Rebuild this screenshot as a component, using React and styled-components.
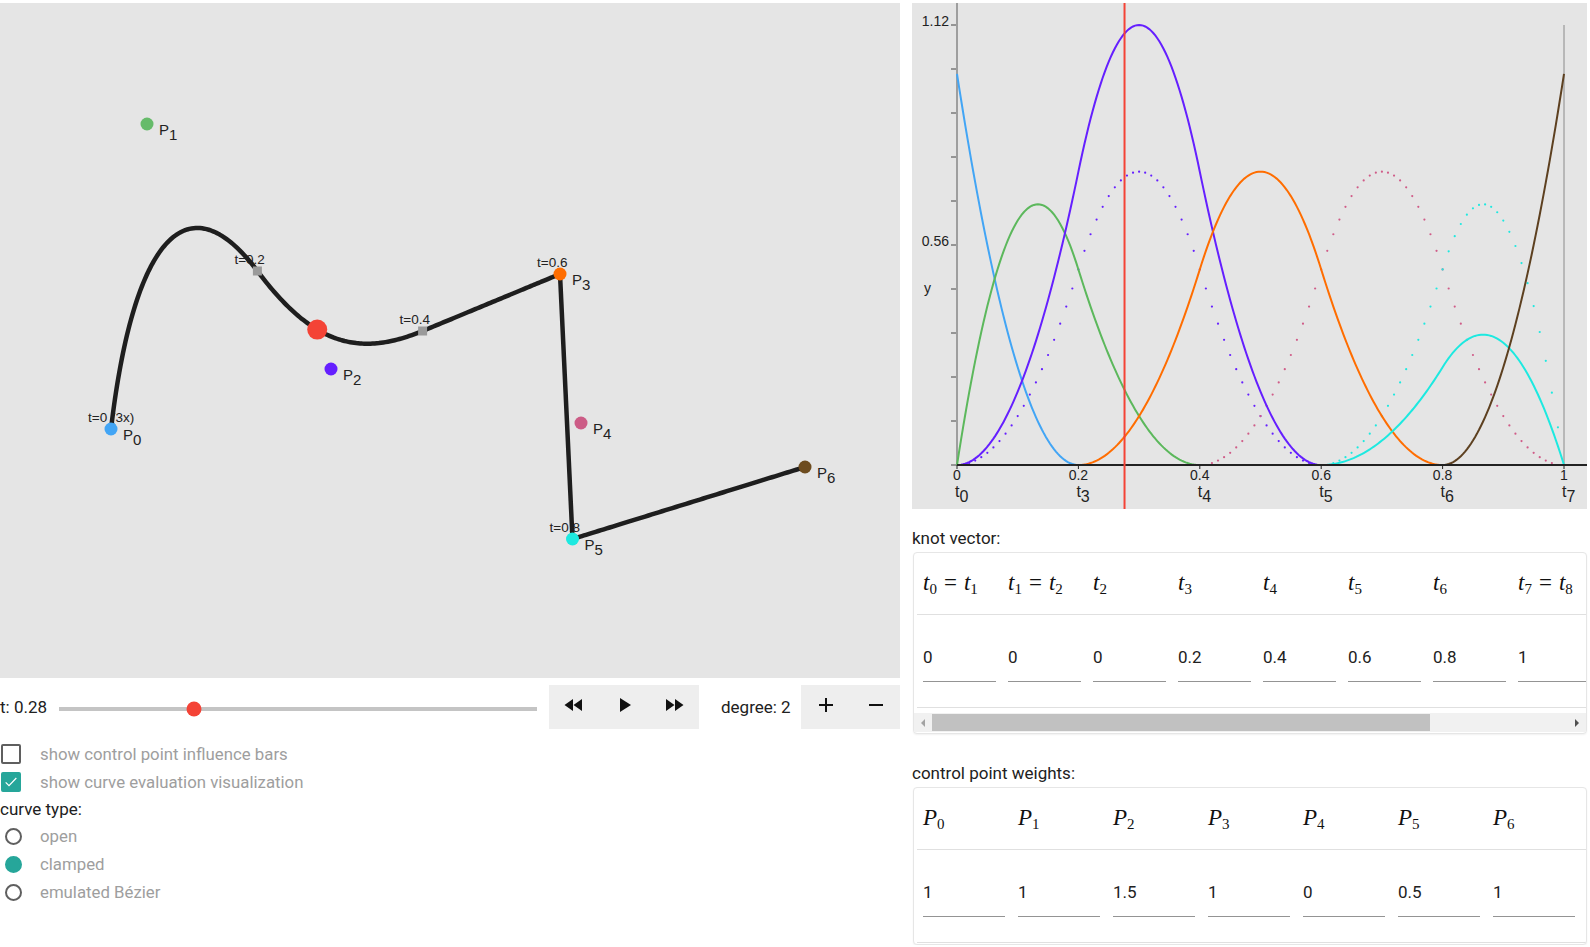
import React from "react";
import styled, { createGlobalStyle } from "styled-components";

const KNOTS = [0, 0, 0, 0.2, 0.4, 0.6, 0.8, 1, 1, 1];
const DEGREE = 2;
const WEIGHTS = [1, 1, 1.5, 1, 0, 0.5, 1];
const T = 0.276;
const SLIDER_POS = 0.283;

const POINTS = [
  { x: 111, y: 426, color: "#42a5f5" },
  { x: 147, y: 121, color: "#66bb6a" },
  { x: 331, y: 366, color: "#651fff" },
  { x: 560, y: 271, color: "#ff6d00" },
  { x: 581, y: 420, color: "#cc5c86" },
  { x: 572.5, y: 536, color: "#1de9e0" },
  { x: 805, y: 464, color: "#6d4c1f" },
];

const basis = (i, p, t) => {
  if (p === 0) {
    const a = KNOTS[i];
    const b = KNOTS[i + 1];
    if (t >= a && t < b) return 1;
    if (t === 1 && b === 1 && a < b) return 1;
    return 0;
  }
  let v = 0;
  const d1 = KNOTS[i + p] - KNOTS[i];
  if (d1 > 0) v += ((t - KNOTS[i]) / d1) * basis(i, p - 1, t);
  const d2 = KNOTS[i + p + 1] - KNOTS[i + 1];
  if (d2 > 0) v += ((KNOTS[i + p + 1] - t) / d2) * basis(i + 1, p - 1, t);
  return v;
};

const curvePoint = (t) => {
  let x = 0, y = 0, s = 0;
  POINTS.forEach((pt, i) => {
    const n = WEIGHTS[i] * basis(i, DEGREE, t);
    x += n * pt.x;
    y += n * pt.y;
    s += n;
  });
  return { x: x / s, y: y / s };
};

const range = (n) => Array.from({ length: n + 1 }, (_, k) => k / n);

const curvePath = range(400)
  .map((t, k) => {
    const p = curvePoint(t);
    return `${k ? "L" : "M"}${p.x.toFixed(2)},${p.y.toFixed(2)}`;
  })
  .join("");

const KNOT_MARKS = [
  { t: 0, label: "t=0 (3x)" },
  { t: 0.2, label: "t=0.2" },
  { t: 0.4, label: "t=0.4" },
  { t: 0.6, label: "t=0.6" },
  { t: 0.8, label: "t=0.8" },
];

// chart geometry
const CH = { x0: 45, x1: 652, y0: 462, yTop: 22, max: 1.125, width: 675, height: 506 };
const chx = (t) => CH.x0 + t * (CH.x1 - CH.x0);
const chy = (v) => CH.y0 - (v / CH.max) * (CH.y0 - CH.yTop);

const CHART_COLORS = ["#42a5f5", "#5cb85c", "#651fff", "#ff6d00", "#d05c88", "#1de9e0", "#5d4020"];

const solidPath = (i) =>
  range(300)
    .map((t, k) => `${k ? "L" : "M"}${chx(t).toFixed(2)},${chy(WEIGHTS[i] * basis(i, DEGREE, t)).toFixed(2)}`)
    .join("");

const KNOT_HEADERS = [
  [0, 1], [1, 2], [2], [3], [4], [5], [6], [7, 8],
];
const KNOT_VALUES = ["0", "0", "0", "0.2", "0.4", "0.6", "0.8", "1"];
const WEIGHT_VALUES = ["1", "1", "1.5", "1", "0", "0.5", "1"];

const GlobalStyle = createGlobalStyle`
  body {
    margin: 0;
    background: #ffffff;
    font-family: Roboto, "Liberation Sans", sans-serif;
    color: #212121;
    overflow: hidden;
  }
`;

export default function App() {
  return (
    <>
      <GlobalStyle />
      <Page>
        <LeftColumn>
          <CurveCanvas />
          <ControlsRow>
            <TLabel>t: 0.28</TLabel>
            <SliderTrack>
              <SliderThumb style={{ left: `${SLIDER_POS * 100}%` }} />
            </SliderTrack>
            <ButtonGroup $ml={12}>
              <IconButton $w={50}>
                <Icon d="M11 18V6l-8.5 6 8.5 6zm.5-6l8.5 6V6l-8.5 6z" />
              </IconButton>
              <IconButton $w={50}>
                <Icon d="M8 5v14l11-7z" />
              </IconButton>
              <IconButton $w={50}>
                <Icon d="M4 18l8.5-6L4 6v12zm9-12v12l8.5-6L13 6z" />
              </IconButton>
            </ButtonGroup>
            <DegreeLabel>degree: 2</DegreeLabel>
            <ButtonGroup $ml={0}>
              <IconButton $w={50}>
                <Icon d="M19 13h-6v6h-2v-6H5v-2h6V5h2v6h6v2z" />
              </IconButton>
              <IconButton $w={49}>
                <Icon d="M19 13H5v-2h14v2z" />
              </IconButton>
            </ButtonGroup>
          </ControlsRow>
          <OptionsList>
            <OptionRow>
              <CheckBox />
              <OptionText $gap={19}>show control point influence bars</OptionText>
            </OptionRow>
            <OptionRow>
              <CheckBox $checked>
                <svg width="18" height="18" viewBox="0 0 24 24">
                  <path d="M4 12.5l5 5L20 6" fill="none" stroke="#fff" strokeWidth="1.8" />
                </svg>
              </CheckBox>
              <OptionText $gap={19}>show curve evaluation visualization</OptionText>
            </OptionRow>
            <SectionTitle>curve type:</SectionTitle>
            <OptionRow>
              <Radio />
              <OptionText $gap={18}>open</OptionText>
            </OptionRow>
            <OptionRow>
              <Radio $checked />
              <OptionText $gap={18}>clamped</OptionText>
            </OptionRow>
            <OptionRow>
              <Radio />
              <OptionText $gap={18}>emulated Bézier</OptionText>
            </OptionRow>
          </OptionsList>
        </LeftColumn>

        <RightColumn>
          <BasisChart />
          <FieldLabel $mt={19}>knot vector:</FieldLabel>
          <Card>
            <TableClip>
              <HeaderRow>
                {KNOT_HEADERS.map((h, i) => (
                  <HeaderCell key={i} $w={85}>
                    <MathText>
                      <i>t</i>
                      <sub>{h[0]}</sub>
                      {h.length > 1 && (
                        <>
                          <Eq>=</Eq>
                          <i>t</i>
                          <sub>{h[1]}</sub>
                        </>
                      )}
                    </MathText>
                  </HeaderCell>
                ))}
              </HeaderRow>
              <BodyRow>
                {KNOT_VALUES.map((v, i) => (
                  <BodyCell key={i} $w={85}>
                    <Field $w={73}>{v}</Field>
                  </BodyCell>
                ))}
              </BodyRow>
            </TableClip>
            <ScrollBar>
              <ScrollArrow $dir="left" $dim />
              <ScrollThumb />
              <ScrollArrow $dir="right" />
            </ScrollBar>
          </Card>
          <FieldLabel $mt={29}>control point weights:</FieldLabel>
          <Card>
            <TableClip>
              <HeaderRow>
                {WEIGHT_VALUES.map((_, i) => (
                  <HeaderCell key={i} $w={95}>
                    <MathText>
                      <i>P</i>
                      <sub>{i}</sub>
                    </MathText>
                  </HeaderCell>
                ))}
              </HeaderRow>
              <BodyRow>
                {WEIGHT_VALUES.map((v, i) => (
                  <BodyCell key={i} $w={95}>
                    <Field $w={82}>{v}</Field>
                  </BodyCell>
                ))}
              </BodyRow>
            </TableClip>
          </Card>
        </RightColumn>
      </Page>
    </>
  );
}

const Icon = ({ d }) => (
  <svg width="24" height="24" viewBox="0 0 24 24">
    <path d={d} fill="#111" />
  </svg>
);

const CurveCanvas = () => {
  const red = curvePoint(T);
  return (
    <CanvasBox>
      <svg width="900" height="675">
        <g fontFamily="'Liberation Sans', Arial, sans-serif" fontSize="13.5" fill="#222">
          {KNOT_MARKS.map((m) => {
            const p = curvePoint(m.t);
            return (
              <text key={m.t} x={p.x - 23} y={p.y - 7}>
                {m.label}
              </text>
            );
          })}
        </g>
        <path d={curvePath} fill="none" stroke="#1e1e1e" strokeWidth="4.5" strokeLinejoin="round" />
        {KNOT_MARKS.slice(1).map((m) => {
          const p = curvePoint(m.t);
          return <rect key={m.t} x={p.x - 4.5} y={p.y - 4.5} width="9" height="9" fill="#9a9a9a" />;
        })}
        {POINTS.map((p, i) => (
          <g key={i}>
            <circle cx={p.x} cy={p.y} r="6.5" fill={p.color} />
            <text x={p.x + 12} y={p.y + 11} fontFamily="'Liberation Sans', Arial, sans-serif" fontSize="15" fill="#222">
              P<tspan dy="5">{i}</tspan>
            </text>
          </g>
        ))}
        <circle cx={red.x} cy={red.y} r="10" fill="#f44336" />
      </svg>
    </CanvasBox>
  );
};

const BasisChart = () => {
  const yTicks = range(10);
  const xTicks = [0, 0.2, 0.4, 0.6, 0.8, 1];
  const tNames = [0, 3, 4, 5, 6, 7];
  return (
    <ChartPanel>
      <svg width={CH.width} height={CH.height}>
        <g fontFamily="'Liberation Sans', Arial, sans-serif" fill="#222">
          {yTicks.map((k) => (
            <line key={k} x1={CH.x0 - 6} x2={CH.x0} y1={chy(k * CH.max)} y2={chy(k * CH.max)} stroke="#444" strokeWidth="1" />
          ))}
          <text x={CH.x0 - 8} y={chy(CH.max) + 1} fontSize="14" textAnchor="end">1.12</text>
          <text x={CH.x0 - 8} y={chy(CH.max / 2) + 1} fontSize="14" textAnchor="end">0.56</text>
          <text x={12} y={chy(CH.max * 0.4) + 4} fontSize="14">y</text>
          <line x1={CH.x0} x2={CH.x0} y1={0} y2={CH.y0} stroke="#9e9e9e" strokeWidth="2" />
          <line x1={CH.x1} x2={CH.x1} y1={CH.yTop} y2={CH.y0} stroke="#8a8a8a" strokeWidth="1" />
          {WEIGHTS.map((w, i) =>
            w !== 1
              ? range(100)
                  .filter((t) => basis(i, DEGREE, t) > 0.004)
                  .map((t) => (
                    <circle key={`${i}-${t}`} cx={chx(t)} cy={chy(basis(i, DEGREE, t))} r="1.1" fill={CHART_COLORS[i]} />
                  ))
              : null
          )}
          {WEIGHTS.map((_, i) => (
            <path key={i} d={solidPath(i)} fill="none" stroke={CHART_COLORS[i]} strokeWidth="2" />
          ))}
          <line x1={CH.x0} x2={CH.width} y1={CH.y0} y2={CH.y0} stroke="#222" strokeWidth="2" />
          {xTicks.map((t, k) => (
            <g key={t}>
              <line x1={chx(t)} x2={chx(t)} y1={CH.y0} y2={CH.y0 + 4} stroke="#222" strokeWidth="1" />
              <text x={chx(t)} y={CH.y0 + 15} fontSize="14" textAnchor="middle">
                {t === 0 ? "0" : t === 1 ? "1" : t.toFixed(1)}
              </text>
              <text x={chx(t) - 2} y={CH.y0 + 32} fontSize="16">
                t<tspan dy="5">{tNames[k]}</tspan>
              </text>
            </g>
          ))}
          <line x1={chx(T)} x2={chx(T)} y1={0} y2={CH.height} stroke="#f44336" strokeWidth="2" />
        </g>
      </svg>
    </ChartPanel>
  );
};

const Page = styled.div`
  display: grid;
  grid-template-columns: 900px 675px;
  column-gap: 12px;
  padding-top: 3px;
`;

const LeftColumn = styled.div`
  display: flex;
  flex-direction: column;
`;

const RightColumn = styled.div`
  display: flex;
  flex-direction: column;
`;

const CanvasBox = styled.div`
  width: 900px;
  height: 675px;
  background: #e5e5e5;
  svg {
    display: block;
  }
`;

const ControlsRow = styled.div`
  display: flex;
  align-items: center;
  height: 44px;
  margin-top: 7px;
`;

const TLabel = styled.div`
  flex: none;
  width: 47px;
  font-size: 17px;
  line-height: 20px;
  white-space: nowrap;
  color: #212121;
`;

const SliderTrack = styled.div`
  position: relative;
  flex: none;
  width: 478px;
  height: 4px;
  margin-left: 12px;
  margin-top: 4px;
  background: #c4c4c4;
`;

const SliderThumb = styled.span`
  position: absolute;
  top: 50%;
  width: 15px;
  height: 15px;
  border-radius: 50%;
  background: #f44336;
  transform: translate(-50%, -50%);
`;

const ButtonGroup = styled.div`
  display: flex;
  flex: none;
  height: 44px;
  margin-left: ${(p) => p.$ml}px;
  background: #eeeeee;
`;

const IconButton = styled.div`
  display: flex;
  align-items: center;
  justify-content: center;
  width: ${(p) => p.$w}px;
  height: 44px;
  svg {
    display: block;
    margin-top: -4px;
  }
`;

const DegreeLabel = styled.div`
  flex: none;
  width: 80px;
  margin-left: 22px;
  font-size: 17px;
  line-height: 20px;
  white-space: nowrap;
  color: #212121;
`;

const OptionsList = styled.div`
  display: flex;
  flex-direction: column;
  margin-top: 11px;
`;

const OptionRow = styled.div`
  display: flex;
  align-items: center;
  height: 28px;
`;

const CheckBox = styled.span`
  display: flex;
  align-items: center;
  justify-content: center;
  box-sizing: border-box;
  width: 20px;
  height: 20px;
  margin-left: 1px;
  border-radius: 2px;
  border: 2px solid ${(p) => (p.$checked ? "#26a69a" : "#5f5f5f")};
  background: ${(p) => (p.$checked ? "#26a69a" : "transparent")};
`;

const Radio = styled.span`
  box-sizing: border-box;
  width: 17px;
  height: 17px;
  margin-left: 5px;
  border-radius: 50%;
  border: 2px solid ${(p) => (p.$checked ? "#26a69a" : "#5f5f5f")};
  background: ${(p) => (p.$checked ? "#26a69a" : "transparent")};
`;

const OptionText = styled.span`
  margin-left: ${(p) => p.$gap}px;
  font-size: 16.8px;
  color: #9e9e9e;
`;

const SectionTitle = styled.div`
  height: 26px;
  line-height: 26px;
  font-size: 17px;
  color: #212121;
`;

const ChartPanel = styled.div`
  width: 675px;
  height: 506px;
  background: #e5e5e5;
  overflow: hidden;
  svg {
    display: block;
  }
`;

const FieldLabel = styled.div`
  margin-top: ${(p) => p.$mt}px;
  font-size: 17px;
  line-height: 20px;
  color: #212121;
`;

const Card = styled.div`
  margin: 4px 0 0 1px;
  border: 1px solid #e6e6e6;
  border-radius: 4px;
  box-shadow: 0 1px 2px rgba(0, 0, 0, 0.06);
  background: #ffffff;
  padding-bottom: 1px;
  overflow: hidden;
`;

const TableClip = styled.div`
  overflow: hidden;
  padding: 0 0 0 3px;
`;

const HeaderRow = styled.div`
  display: flex;
  width: max-content;
  min-width: 100%;
  border-bottom: 1px solid #e0e0e0;
`;

const BodyRow = styled.div`
  display: flex;
  width: max-content;
  min-width: 100%;
  border-bottom: 1px solid #e0e0e0;
`;

const HeaderCell = styled.div`
  flex: none;
  box-sizing: border-box;
  width: ${(p) => p.$w}px;
  padding: 16px 0 0 6px;
  height: 61px;
`;

const BodyCell = styled.div`
  flex: none;
  box-sizing: border-box;
  width: ${(p) => p.$w}px;
  padding: 27px 0 25px 6px;
`;

const MathText = styled.span`
  display: inline-block;
  font-family: "Liberation Serif", "DejaVu Serif", serif;
  font-size: 23px;
  line-height: 28px;
  color: #111;
  white-space: nowrap;
  i {
    font-style: italic;
  }
  sub {
    font-size: 15px;
    vertical-align: -4px;
    line-height: 0;
  }
`;

const Eq = styled.span`
  margin: 0 7px;
`;

const Field = styled.div`
  width: ${(p) => p.$w}px;
  padding: 5px 0 14px;
  font-size: 17px;
  line-height: 20px;
  color: #212121;
  border-bottom: 1px solid #949494;
`;

const ScrollBar = styled.div`
  display: flex;
  align-items: center;
  height: 19px;
  margin-top: 5px;
  background: #f1f1f1;
`;

const ScrollArrow = styled.span`
  width: 0;
  height: 0;
  margin: 0 7px;
  border-top: 4px solid transparent;
  border-bottom: 4px solid transparent;
  ${(p) =>
    p.$dir === "left"
      ? `border-right: 4px solid ${p.$dim ? "#a3a3a3" : "#505050"};`
      : `border-left: 4px solid ${p.$dim ? "#a3a3a3" : "#505050"}; margin-left: auto;`}
`;

const ScrollThumb = styled.span`
  width: 498px;
  height: 17px;
  background: #c1c1c1;
`;
